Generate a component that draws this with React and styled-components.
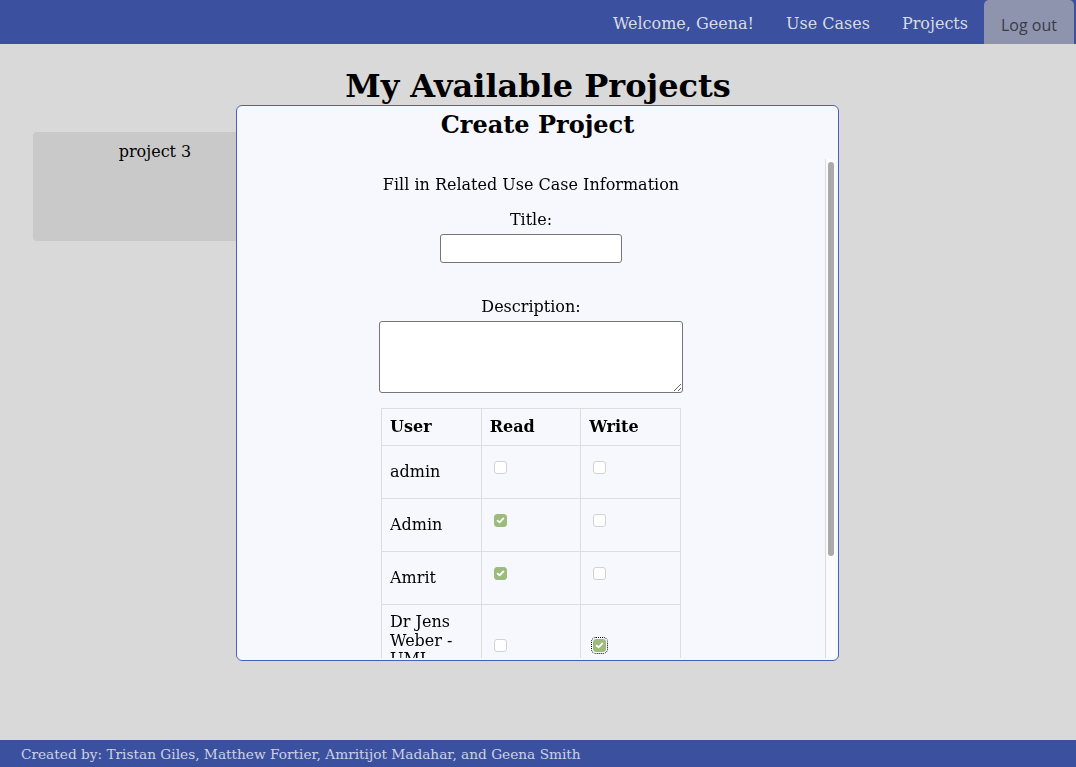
import React, { useState } from 'react';
import styled, { createGlobalStyle } from 'styled-components';

const GlobalStyle = createGlobalStyle`
	html, body {
		margin: 0;
		padding: 0;
		height: 100%;
	}
	body {
		background: #d9d9d9;
		font-family: "DejaVu Serif", serif;
		font-size: 16px;
		color: #000;
	}
`;

const Page = styled.div`
	min-height: 100vh;
	display: flex;
	flex-direction: column;
`;

const NavBar = styled.nav`
	height: 44px;
	background: #3b509e;
	display: flex;
	justify-content: flex-end;
	align-items: stretch;
	padding-right: 2px;
`;

const NavItem = styled.a`
	display: flex;
	align-items: center;
	padding: 2px 16px 0;
	color: #d8dbe6;
	font-size: 16px;
	text-decoration: none;
	cursor: pointer;
`;

const LogoutTab = styled.button`
	width: 90px;
	border: none;
	border-radius: 5px 5px 0 0;
	background: #8f94ae;
	color: #3a3b47;
	font-family: "Open Sans", "Noto Sans", sans-serif;
	font-size: 16px;
	padding: 5px 0 0;
	cursor: pointer;
`;

const Main = styled.main`
	flex: 1;
	padding: 0 33px;
`;

const Heading = styled.h1`
	margin: 23px 0 27px;
	text-align: center;
	font-size: 32px;
	line-height: 38px;
`;

const CardGrid = styled.div`
	display: grid;
	grid-template-columns: repeat(3, 244px);
	gap: 32px;
`;

const ProjectCard = styled.div`
	height: 109px;
	background: #c9c9c9;
	border-radius: 4px;
	text-align: center;
	padding-top: 10px;
	box-sizing: border-box;
`;

const Footer = styled.footer`
	height: 27px;
	background: #3b509e;
	color: #cdd2e6;
	font-size: 13.7px;
	display: flex;
	align-items: center;
	padding-left: 21px;
`;

const Overlay = styled.div`
	position: fixed;
	inset: 0 1px 1px 0;
	display: flex;
	align-items: center;
	justify-content: center;
`;

const Modal = styled.div`
	width: 603px;
	height: 556px;
	box-sizing: border-box;
	background: #f7f8fd;
	border: 1px solid #4a60bd;
	border-radius: 6px;
	display: flex;
	flex-direction: column;
`;

const ModalTitle = styled.h2`
	margin: 5px 0 20px;
	text-align: center;
	font-size: 24px;
	line-height: 28px;
`;

const ScrollArea = styled.div`
	flex: 1;
	min-height: 0;
	display: flex;
	margin: 0 3px 2px 0;
`;

const ScrollContent = styled.div`
	flex: 1;
	overflow: hidden;
`;

const ScrollTrack = styled.div`
	width: 9px;
	background: #fbfbfd;
	border-left: 1px solid #dcdcdc;
`;

const ScrollThumb = styled.div`
	margin: 3px 1px 0 2px;
	height: ${p => p.size}px;
	background: #aaaaaa;
	border-radius: 3px;
`;

const Form = styled.form`
	display: flex;
	flex-direction: column;
	align-items: center;
	padding: 16px 0;
`;

const Intro = styled.p`
	margin: 0 0 16px;
	line-height: 19px;
`;

const Label = styled.label`
	line-height: 19px;
	margin-bottom: 5px;
`;

const TextInput = styled.input`
	width: 182px;
	height: 29px;
	box-sizing: border-box;
	border: 1px solid #767676;
	border-radius: 3px;
	background: #fff;
	margin-bottom: 34px;
`;

const TextArea = styled.textarea`
	width: 304px;
	height: 72px;
	box-sizing: border-box;
	border: 1px solid #767676;
	border-radius: 3px;
	background: #fff;
	margin-bottom: 15px;
`;

const Table = styled.table`
	border-collapse: collapse;
	width: 300px;
	table-layout: fixed;
`;

const Row = styled.tr`
	height: ${p => (p.head ? 'auto' : '53px')};
`;

const HeadCell = styled.th`
	border: 1px solid #dddddd;
	padding: 8px;
	text-align: left;
	line-height: 20px;
`;

const Cell = styled.td`
	border: 1px solid #dddddd;
	padding: 8px;
	line-height: 18.6px;
	vertical-align: middle;
`;

const Box = styled.span`
	display: inline-block;
	width: 13px;
	height: 13px;
	box-sizing: border-box;
	margin: -2px 0 0 4px;
	vertical-align: top;
	border-radius: 3px;
	border: 1px solid ${p => (p.checked ? '#9dbb7c' : '#d2d2d2')};
	background: ${p => (p.checked ? '#9dbb7c' : '#ffffff')};
	outline: ${p => (p.focused ? '1px dotted #000' : 'none')};
	outline-offset: 1px;
	cursor: pointer;
	svg {
		display: block;
	}
`;

const Check = ({ checked, focused }) => (
	<Box checked={checked} focused={focused}>
		{checked && (
			<svg width="11" height="11" viewBox="0 0 11 11">
				<path d="M2.6 5.6 L4.6 7.4 L8.4 3.4" fill="none" stroke="#fff" strokeWidth="1.8" strokeLinecap="round" strokeLinejoin="round" />
			</svg>
		)}
	</Box>
);

const users = [
	{ name: 'admin', read: false, write: false },
	{ name: 'Admin', read: true, write: false },
	{ name: 'Amrit', read: true, write: false },
	{ name: 'Dr Jens Weber - UML Teacher', read: false, write: true, focused: true },
	{ name: 'Geena', read: false, write: false }
];

export default function App() {
	const [title, setTitle] = useState('');
	const [description, setDescription] = useState('');

	return (
		<Page>
			<GlobalStyle />
			<NavBar>
				<NavItem>Welcome, Geena!</NavItem>
				<NavItem>Use Cases</NavItem>
				<NavItem>Projects</NavItem>
				<LogoutTab>Log out</LogoutTab>
			</NavBar>
			<Main>
				<Heading>My Available Projects</Heading>
				<CardGrid>
					<ProjectCard>project 3</ProjectCard>
				</CardGrid>
			</Main>
			<Footer>Created by: Tristan Giles, Matthew Fortier, Amritijot Madahar, and Geena Smith</Footer>

			<Overlay>
				<Modal>
					<ModalTitle>Create Project</ModalTitle>
					<ScrollArea>
						<ScrollContent>
							<Form onSubmit={e => e.preventDefault()}>
								<Intro>Fill in Related Use Case Information</Intro>
								<Label htmlFor="title">Title:</Label>
								<TextInput id="title" value={title} onChange={e => setTitle(e.target.value)} />
								<Label htmlFor="description">Description:</Label>
								<TextArea id="description" value={description} onChange={e => setDescription(e.target.value)} />
								<Table>
									<thead>
										<Row head>
											<HeadCell>User</HeadCell>
											<HeadCell>Read</HeadCell>
											<HeadCell>Write</HeadCell>
										</Row>
									</thead>
									<tbody>
										{users.map(u => (
											<Row key={u.name}>
												<Cell>{u.name}</Cell>
												<Cell>
													<Check checked={u.read} />
												</Cell>
												<Cell>
													<Check checked={u.write} focused={u.focused} />
												</Cell>
											</Row>
										))}
									</tbody>
								</Table>
							</Form>
						</ScrollContent>
						<ScrollTrack>
							<ScrollThumb size={394} />
						</ScrollTrack>
					</ScrollArea>
				</Modal>
			</Overlay>
		</Page>
	);
}
